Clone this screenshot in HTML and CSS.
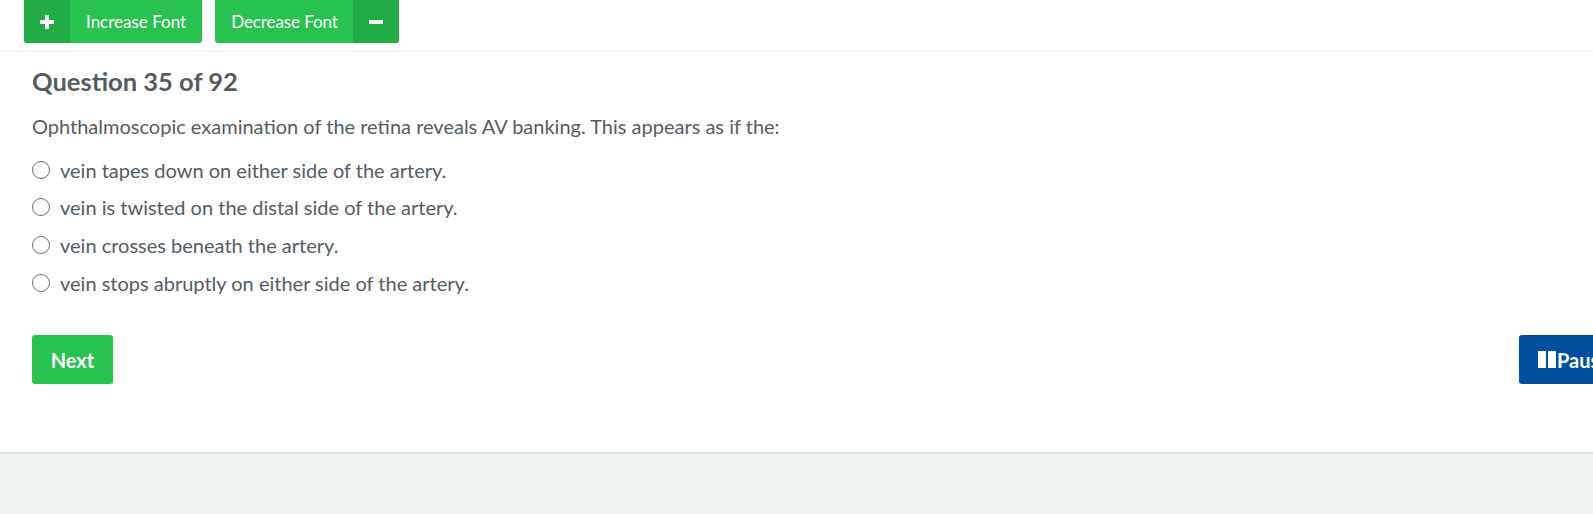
FILE: index.html
```html
<!DOCTYPE html>
<html lang="en">
<head>
<meta charset="utf-8">
<title>Question 35 of 92</title>
<link rel="stylesheet" href="styles.css">
</head>
<body>
<div class="page">
  <div class="toolbar">
    <button class="font-btn"><span class="icon-part"><svg width="14" height="14" viewBox="0 0 14 14"><rect x="5" y="0" width="4" height="14" fill="#fff"/><rect x="0" y="5" width="14" height="4" fill="#fff"/></svg></span><span class="label">Increase Font</span></button>
    <button class="font-btn font-btn-dec"><span class="label">Decrease Font</span><span class="icon-part"><svg width="14" height="14" viewBox="0 0 14 14"><rect x="0" y="5" width="14" height="4" fill="#fff"/></svg></span></button>
  </div>
  <div class="panel">
    <h2 class="q-title">Question 35 of 92</h2>
    <p class="q-text">Ophthalmoscopic examination of the retina reveals AV banking. This appears as if the:</p>
    <ul class="options">
      <li><span class="radio"></span>vein tapes down on either side of the artery.</li>
      <li><span class="radio"></span>vein is twisted on the distal side of the artery.</li>
      <li><span class="radio"></span>vein crosses beneath the artery.</li>
      <li><span class="radio"></span>vein stops abruptly on either side of the artery.</li>
    </ul>
    <div class="actions">
      <button class="next-btn">Next</button>
      <button class="pause-btn"><span class="pause-icon"><span></span><span></span></span>Pause</button>
    </div>
  </div>
</div>
</body>
</html>
```
FILE: styles.css
```css
html, body {
  margin: 0;
  padding: 0;
}
body {
  background: #eef1f2;
  font-family: Lato, "Liberation Sans", sans-serif;
  color: #545c63;
  overflow: hidden;
  width: 1593px;
  height: 514px;
}
.page {
  background: #fff;
  border-bottom: 2px solid #e1e4e6;
}
.toolbar {
  display: flex;
  gap: 13px;
  padding: 0 24px;
  height: 51px;
  border-bottom: 1px solid #f0f1f2;
}
.font-btn {
  display: flex;
  align-items: stretch;
  height: 43px;
  padding: 0;
  border: none;
  border-radius: 0 0 3px 3px;
  background: #28c24f;
  color: #fff;
  font-family: inherit;
  font-size: 17px;
  overflow: hidden;
  cursor: pointer;
}
.font-btn .icon-part {
  display: flex;
  align-items: center;
  justify-content: center;
  width: 46px;
  background: #22ad44;
}
.font-btn .label {
  display: flex;
  align-items: center;
  padding: 0 16px;
}
.font-btn-dec .label {
  padding: 0 15px 0 16px;
  letter-spacing: -0.1px;
}
.panel {
  padding: 13px 31px 68px 32px;
}
.q-title {
  margin: 0;
  font-size: 25.5px;
  font-weight: 700;
  line-height: 32px;
  color: #545c63;
}
.q-text {
  margin: 15px 0 11px;
  font-size: 20px;
  line-height: 28px;
}
.options {
  list-style: none;
  margin: 0;
  padding: 0;
}
.options li {
  display: flex;
  align-items: center;
  height: 37.6px;
  font-size: 20px;
}
.radio {
  width: 16px;
  height: 16px;
  border: 1.5px solid #6b6f72;
  border-radius: 50%;
  margin-right: 10px;
  flex: none;
}
.actions {
  display: flex;
  justify-content: space-between;
  margin-top: 34px;
  margin-right: -87px;
}
.next-btn {
  width: 81px;
  height: 49px;
  border: none;
  border-radius: 3px;
  background: #28c24f;
  color: #fff;
  font-family: inherit;
  font-size: 20px;
  font-weight: 700;
}
.pause-btn {
  display: flex;
  align-items: center;
  width: 130px;
  height: 49px;
  padding: 0 0 0 19px;
  border: none;
  border-radius: 3px;
  background: #00509f;
  color: #fff;
  font-family: inherit;
  font-size: 20px;
  font-weight: 700;
}
.pause-icon {
  display: flex;
  gap: 2px;
  margin-right: 1px;
}
.pause-icon span {
  width: 8px;
  height: 17px;
  background: #fff;
}
```
